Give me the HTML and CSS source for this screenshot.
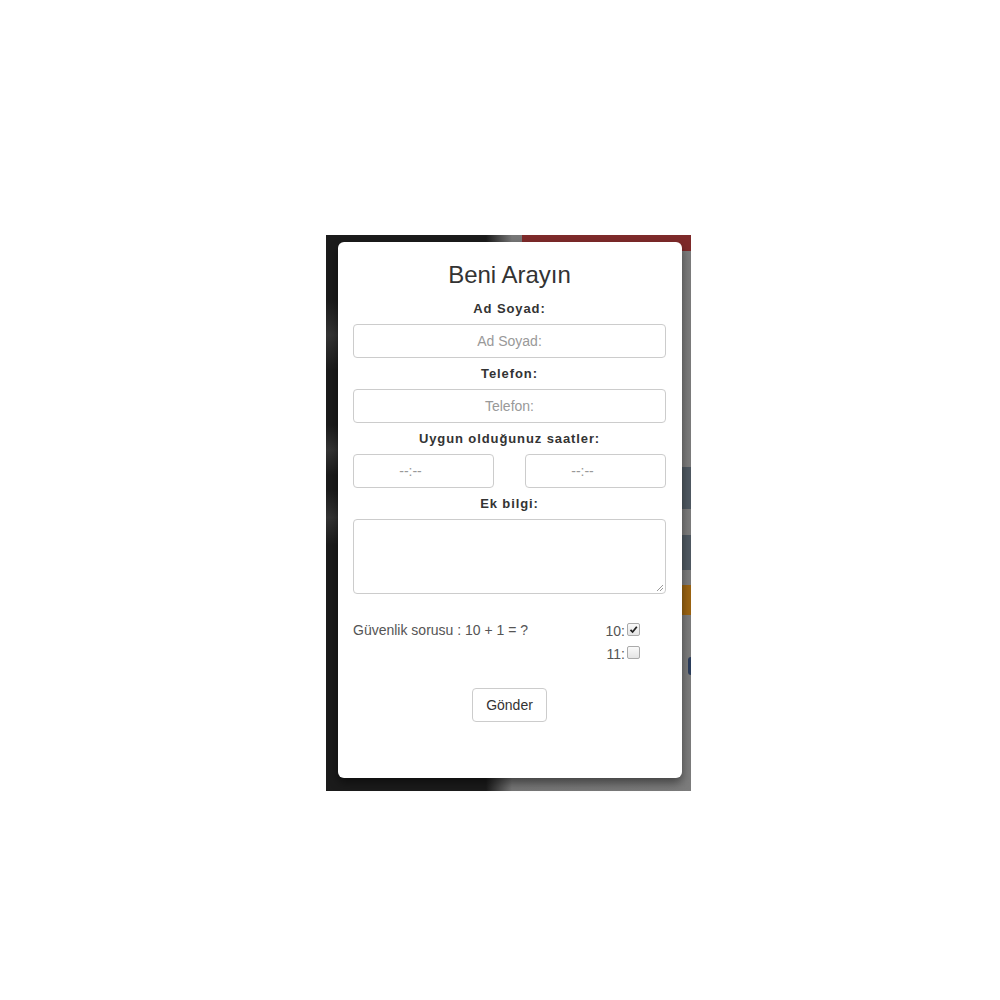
FILE: index.html
```html
<!DOCTYPE html>
<html lang="tr">
<head>
<meta charset="utf-8">
<title>Beni Arayın</title>
<link rel="stylesheet" href="styles.css">
</head>
<body>
<div class="page">
  <div class="backdrop">
    <div class="bg-red"></div>
    <div class="bg-slate bg-slate1"></div>
    <div class="bg-slate bg-slate2"></div>
    <div class="bg-orange"></div>
    <div class="bg-blue"></div>
    <div class="bg-patch bg-patch1"></div>
    <div class="bg-patch bg-patch2"></div>
    <div class="bg-patch bg-patch3"></div>
    <form class="modal">
      <h2 class="title">Beni Arayın</h2>
      <label class="label">Ad Soyad:</label>
      <input class="field" type="text" placeholder="Ad Soyad:">
      <label class="label">Telefon:</label>
      <input class="field" type="text" placeholder="Telefon:">
      <label class="label">Uygun olduğunuz saatler:</label>
      <div class="times">
        <input class="field time" type="text" placeholder="--:--">
        <input class="field time" type="text" placeholder="--:--">
      </div>
      <label class="label">Ek bilgi:</label>
      <div class="area-wrap">
        <textarea class="field area"></textarea>
        <svg class="grip" width="8" height="8" viewBox="0 0 8 8"><path d="M7 1 L1 7 M7 4 L4 7" stroke="#999" stroke-width="1"/></svg>
      </div>
      <div class="security">
        <span class="question">Güvenlik sorusu : 10 + 1 = ?</span>
        <div class="answers">
          <div class="answer"><span>10:</span><span class="box"><svg width="9" height="9" viewBox="0 0 9 9"><path d="M1.5 4.8 L3.6 7 L7.8 1.8" fill="none" stroke="#222" stroke-width="1.8"/></svg></span></div>
          <div class="answer"><span>11:</span><span class="box"></span></div>
        </div>
      </div>
      <div class="actions">
        <button class="btn" type="button">Gönder</button>
      </div>
    </form>
  </div>
</div>
</body>
</html>
```
FILE: styles.css
```css
html, body {
  margin: 0;
  padding: 0;
  background: #fff;
}
body {
  font-family: "Liberation Sans", Arial, sans-serif;
  color: #333;
}
.page {
  width: 1000px;
  height: 1000px;
  padding-top: 235px;
  padding-left: 326px;
  box-sizing: border-box;
}
.backdrop {
  position: relative;
  width: 365px;
  height: 556px;
  background: linear-gradient(90deg, #1b1b1b 0, #1b1b1b 160px, #777 186px, #7c7c7c 100%);
  padding: 7px 9px 0 12px;
  box-sizing: border-box;
}
.bg-red {
  position: absolute;
  left: 196px;
  top: 0;
  right: 0;
  height: 16px;
  background: #7e2a2a;
}
.bg-slate {
  position: absolute;
  right: 0;
  width: 12px;
  background: #4f5962;
}
.bg-slate1 { top: 232px; height: 42px; }
.bg-slate2 { top: 300px; height: 35px; }
.bg-orange {
  position: absolute;
  right: 0;
  width: 12px;
  top: 350px;
  height: 30px;
  background: #9b6412;
}
.bg-blue {
  position: absolute;
  right: 0;
  width: 3px;
  top: 422px;
  height: 18px;
  background: #2b3d5c;
  border-radius: 3px 0 0 3px;
}
.bg-patch {
  position: absolute;
  left: 0;
  width: 12px;
  background: linear-gradient(#1b1b1b, #333 50%, #1b1b1b);
}
.bg-patch1 { top: 65px; height: 70px; }
.bg-patch2 { top: 190px; height: 50px; }
.bg-patch3 { top: 255px; height: 55px; }
.modal {
  position: relative;
  z-index: 1;
  width: 344px;
  height: 536px;
  background: #fff;
  border-radius: 6px;
  box-shadow: 0 5px 10px rgba(0,0,0,0.45);
  padding: 18px 16px 0 15px;
  box-sizing: border-box;
  display: flex;
  flex-direction: column;
}
.title {
  margin: 0;
  font-size: 24px;
  font-weight: normal;
  line-height: 30px;
  text-align: center;
  color: #333;
}
.label {
  display: block;
  text-align: center;
  font-size: 13px;
  font-weight: bold;
  letter-spacing: 0.9px;
  line-height: 18px;
  margin: 7px 0 6px;
  color: #333;
}
.title + .label {
  margin-top: 10px;
}
.field {
  display: block;
  width: 100%;
  height: 34px;
  box-sizing: border-box;
  border: 1px solid #ccc;
  border-radius: 4px;
  background: #fff;
  font-family: "Liberation Sans", Arial, sans-serif;
  font-size: 14px;
  text-align: center;
  color: #555;
  padding: 6px 12px;
  margin: 0;
  outline: none;
}
.field::placeholder {
  color: #999;
}
.times {
  display: flex;
  gap: 31px;
}
.times .field {
  flex: 1;
  min-width: 0;
}
.field.time {
  padding-right: 38px;
}
.area-wrap {
  position: relative;
}
.area {
  height: 75px;
  resize: none;
}
.grip {
  position: absolute;
  right: 2px;
  bottom: 2px;
}
.security {
  display: flex;
  justify-content: space-between;
  margin-top: 27px;
  font-size: 14px;
  color: #555;
}
.question {
  line-height: 18px;
}
.answers {
  display: flex;
  flex-direction: column;
  align-items: flex-end;
  gap: 5px;
  margin-right: 26px;
  padding-top: 1px;
}
.answer {
  display: flex;
  align-items: flex-start;
  line-height: 18px;
}
.box {
  width: 11px;
  height: 11px;
  margin-left: 2px;
  margin-top: 1px;
  border: 1px solid #aaa;
  border-radius: 2px;
  background: linear-gradient(#fafafa, #e4e4e4);
  display: flex;
  align-items: center;
  justify-content: center;
}
.actions {
  display: flex;
  justify-content: center;
  margin-top: 25px;
}
.btn {
  width: 75px;
  height: 34px;
  border: 1px solid #ccc;
  border-radius: 4px;
  background: #fff;
  font-family: "Liberation Sans", Arial, sans-serif;
  font-size: 14px;
  color: #333;
  padding: 0;
}
```
